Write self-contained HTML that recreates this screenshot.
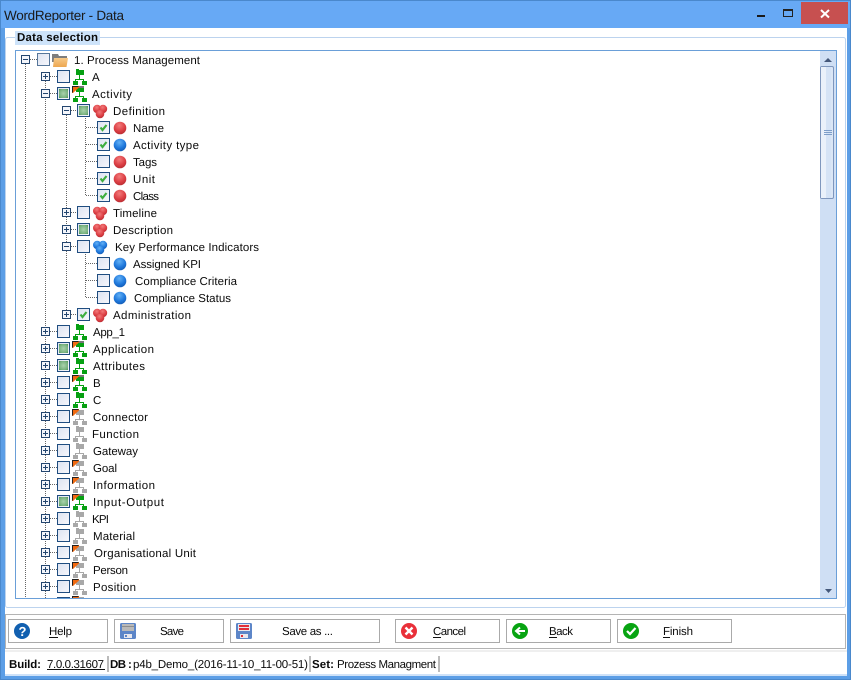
<!DOCTYPE html>
<html><head><meta charset="utf-8"><title>WordReporter - Data</title>
<style>
html,body{margin:0;padding:0;background:#fff;overflow:hidden;width:851px;height:680px}
svg{display:block}
text{font-family:"Liberation Sans",sans-serif;font-size:11.5px;fill:#0a0a0a;text-rendering:geometricPrecision}
.c{shape-rendering:crispEdges}
</style></head><body>
<svg width="851" height="680" viewBox="0 0 851 680" xmlns="http://www.w3.org/2000/svg">
<defs>
<linearGradient id="cbg" x1="0" y1="0" x2="1" y2="1"><stop offset="0" stop-color="#dde3f0"/><stop offset="1" stop-color="#f6f7fc"/></linearGradient>
<radialGradient id="gf" cx=".5" cy=".5" r=".7"><stop offset="0" stop-color="#a9d2ac"/><stop offset=".7" stop-color="#78b27e"/><stop offset="1" stop-color="#4b9354"/></radialGradient>
<linearGradient id="fld" x1="0" y1="0" x2="0" y2="1"><stop offset="0" stop-color="#f7c987"/><stop offset="1" stop-color="#eda750"/></linearGradient>
<radialGradient id="rb" cx=".45" cy=".3" r=".75"><stop offset="0" stop-color="#f27a7a"/><stop offset=".6" stop-color="#dc3f44"/><stop offset="1" stop-color="#b42a30"/></radialGradient>
<radialGradient id="bb" cx=".45" cy=".3" r=".75"><stop offset="0" stop-color="#62b0f5"/><stop offset=".6" stop-color="#1f78dc"/><stop offset="1" stop-color="#1258b0"/></radialGradient>
<clipPath id="tc"><rect x="16" y="51" width="804" height="547"/></clipPath>

<g id="cb"><rect class="c" x=".5" y="-6.5" width="12" height="12" fill="url(#cbg)" stroke="#1f4d80"/></g>
<g id="cf"><use href="#cb"/><rect class="c" x="2" y="-5" width="9" height="9" fill="url(#gf)"/></g>
<g id="ck"><use href="#cb"/><path d="M3.500 -.5L5.500 2L9.500 -3" fill="none" stroke="#3fae3f" stroke-width="2.200"/></g>
<g id="ep"><rect class="c" x=".5" y="-4.5" width="8" height="8" fill="#f4f6fb" stroke="#24466f"/><path class="c" d="M2 -.5H7M4.500 -3V2" stroke="#24466f" fill="none"/></g>
<g id="em"><rect class="c" x=".5" y="-4.5" width="8" height="8" fill="#f4f6fb" stroke="#24466f"/><path class="c" d="M2 -.5H7" stroke="#24466f" fill="none"/></g>

<g id="og"><path class="c" d="M76 -8h3v1h5v5h-8z" fill="#06a012"/><path class="c" d="M79.500 -2v4.500M75.500 6V2.500H83.500V6" fill="none" stroke="#06a012"/><rect class="c" x="73" y="4" width="5" height="4" fill="#06a012"/><rect class="c" x="82" y="4" width="5" height="4" fill="#06a012"/></g>
<g id="oa"><path class="c" d="M76 -8h3v1h5v5h-8z" fill="#a8a8a8"/><path class="c" d="M79.500 -2v4.500M75.500 6V2.500H83.500V6" fill="none" stroke="#a8a8a8"/><rect class="c" x="73" y="4" width="5" height="4" fill="#a8a8a8"/><rect class="c" x="82" y="4" width="5" height="4" fill="#a8a8a8"/></g>
<g id="fl"><path d="M72 -8h7v1.500l-6 5.500h-1z" fill="#f26a10"/><path class="c" d="M72.500 -1.500V-7.500H78.500" fill="none" stroke="#222"/></g>
<g id="fg"><use href="#og"/><rect class="c" x="79" y="-8" width="5" height="2" fill="#777"/><use href="#fl"/></g>
<g id="fa"><use href="#oa"/><use href="#fl"/></g>

<circle id="br" cx="0" cy="0" r="6.300" fill="url(#rb)"/>
<circle id="bl" cx="0" cy="0" r="6.300" fill="url(#bb)"/>
<g id="tr"><circle cx="97.200" cy="-2" r="4.200" fill="url(#rb)"/><circle cx="103" cy="-2" r="4.200" fill="url(#rb)"/><circle cx="100" cy="3" r="4.300" fill="url(#rb)"/></g>
<g id="tb"><circle cx="97.200" cy="-2" r="4.200" fill="url(#bb)"/><circle cx="103" cy="-2" r="4.200" fill="url(#bb)"/><circle cx="100" cy="3" r="4.300" fill="url(#bb)"/></g>
</defs>

<!-- window -->
<rect class="c" width="851" height="680" fill="#5c9ee6"/>
<rect class="c" x="0" y="0" width="851" height="1" fill="#4a88cc"/>
<rect class="c" x="1" y="1" width="849" height="27" fill="#67a9f5"/>
<rect class="c" x="0" y="0" width="1" height="680" fill="#4a88cc"/>
<rect class="c" x="850" y="0" width="1" height="680" fill="#4a88cc"/>
<rect class="c" x="0" y="679" width="851" height="1" fill="#4a88cc"/>
<rect class="c" x="5" y="28" width="842" height="648" fill="#fff"/>
<rect class="c" x="5" y="674" width="842" height="2" fill="#cfe2f8"/>
<rect class="c" x="801" y="2" width="47" height="22" fill="#c75050"/>
<path d="M821 10L829 17.500M829 10L821 17.500" stroke="#fff" stroke-width="2" fill="none"/>
<rect class="c" x="757" y="15" width="8" height="2" fill="#1a1a1a"/>
<rect class="c" x="783.500" y="9.500" width="9" height="7" fill="none" stroke="#222"/>
<rect class="c" x="783" y="9" width="10" height="2" fill="#222"/>
<text x="4" y="20" style="font-size:13.5px;fill:#1a1a1a" textLength="120">WordReporter - Data</text>

<!-- group -->
<rect x="5.500" y="37.500" width="840" height="570" rx="2" fill="#fff" stroke="#bcd3ee"/>
<rect class="c" x="15" y="31" width="85" height="14" fill="#cde3fa"/>
<text x="17" y="41" style="font-weight:bold" textLength="81">Data selection</text>

<!-- tree box -->
<rect class="c" x="15.500" y="50.500" width="821" height="548" fill="#fff" stroke="#6a9fd8"/>

<!-- scrollbar -->
<rect class="c" x="820" y="51" width="16" height="547" fill="#cfdff4"/>
<path d="M824 62l4 -4l4 4z" fill="#44587a"/>
<path d="M825 589l3.500 4l3.500 -4z" fill="#44587a"/>
<rect x="820.500" y="66.500" width="13" height="132" rx="1.500" fill="#dbe7f6" stroke="#7f97bd"/>
<rect class="c" x="821" y="67" width="5" height="131" fill="#eaf1fa"/>
<rect class="c" x="826" y="67" width="5" height="131" fill="#d5e3f5"/>
<rect class="c" x="824" y="130" width="8" height="1" fill="#7d9ec9"/>
<rect class="c" x="824" y="132" width="8" height="1" fill="#7d9ec9"/>
<rect class="c" x="824" y="134" width="8" height="1" fill="#7d9ec9"/>

<g clip-path="url(#tc)">
<!-- dotted lines -->
<g class="c" stroke="#666" stroke-dasharray="1 1" fill="none">
<path d="M25.500 64V598"/>
<path d="M45.500 81V598"/>
<path d="M66.500 115V311"/>
<path d="M85.500 116V196"/>
<path d="M85.500 252V298"/>
<path d="M30 59.500H37M50 76.500H57M50 93.500H57M71 110.500H77M71 212.500H77M71 229.500H77M71 246.500H77M71 314.500H77"/>
<path d="M86 127.500H97M86 144.500H97M86 161.500H97M86 178.500H97M86 195.500H97M86 263.500H97M86 280.500H97M86 297.500H97"/>
<path d="M50 331.500H57M50 348.500H57M50 365.500H57M50 382.500H57M50 399.500H57M50 416.500H57M50 433.500H57M50 450.500H57M50 467.500H57M50 484.500H57M50 501.500H57M50 518.500H57M50 535.500H57M50 552.500H57M50 569.500H57M50 586.500H57M50 603.500H57"/>
</g>

<!-- root -->
<use href="#em" x="21" y="60"/>
<rect class="c" x="37.500" y="53.500" width="12" height="12" fill="url(#cbg)" stroke="#56769a"/>
<path class="c" d="M52 54h6l1 2h8v6H52z" fill="#7d7d7d"/>
<path d="M54 58h14l-1.500 9H53z" fill="url(#fld)"/>
<text x="74" y="64" textLength="126">1. Process Management</text>

<!-- level 1 + -->
<use href="#ep" x="41" y="77"/><use href="#cb" x="57" y="77"/><use href="#og" y="77"/>
<text x="92" y="81">A</text>

<use href="#em" x="41" y="94"/><use href="#cf" x="57" y="94"/><use href="#fg" y="94"/>
<text x="92" y="98" textLength="40">Activity</text>

<use href="#em" x="62" y="111"/><use href="#cf" x="77" y="111"/><use href="#tr" y="111"/>
<text x="113" y="115" textLength="52">Definition</text>

<use href="#ck" x="97" y="128"/><use href="#br" x="120" y="128"/>
<text x="133" y="132" textLength="31">Name</text>
<use href="#ck" x="97" y="145"/><use href="#bl" x="120" y="145"/>
<text x="133" y="149" textLength="66">Activity type</text>
<use href="#cb" x="97" y="162"/><use href="#br" x="120" y="162"/>
<text x="133" y="166" textLength="24">Tags</text>
<use href="#ck" x="97" y="179"/><use href="#br" x="120" y="179"/>
<text x="133" y="183" textLength="22">Unit</text>
<use href="#ck" x="97" y="196"/><use href="#br" x="120" y="196"/>
<text x="133" y="200" textLength="26">Class</text>

<use href="#ep" x="62" y="213"/><use href="#cb" x="77" y="213"/><use href="#tr" y="213"/>
<text x="113" y="217" textLength="44">Timeline</text>
<use href="#ep" x="62" y="230"/><use href="#cf" x="77" y="230"/><use href="#tr" y="230"/>
<text x="113" y="234" textLength="60">Description</text>
<use href="#em" x="62" y="247"/><use href="#cb" x="77" y="247"/><use href="#tb" y="247"/>
<text x="115" y="251" textLength="144">Key Performance Indicators</text>

<use href="#cb" x="97" y="264"/><use href="#bl" x="120" y="264"/>
<text x="133" y="268" textLength="68">Assigned KPI</text>
<use href="#cb" x="97" y="281"/><use href="#bl" x="120" y="281"/>
<text x="135" y="285" textLength="102">Compliance Criteria</text>
<use href="#cb" x="97" y="298"/><use href="#bl" x="120" y="298"/>
<text x="134" y="302" textLength="97">Compliance Status</text>

<use href="#ep" x="62" y="315"/><use href="#ck" x="77" y="315"/><use href="#tr" y="315"/>
<text x="113" y="319" textLength="78">Administration</text>

<use href="#ep" x="41" y="332"/><use href="#cb" x="57" y="332"/><use href="#og" y="332"/>
<text x="93" y="336" textLength="32">App_1</text>
<use href="#ep" x="41" y="349"/><use href="#cf" x="57" y="349"/><use href="#fg" y="349"/>
<text x="93" y="353" textLength="61">Application</text>
<use href="#ep" x="41" y="366"/><use href="#cf" x="57" y="366"/><use href="#og" y="366"/>
<text x="93" y="370" textLength="52">Attributes</text>
<use href="#ep" x="41" y="383"/><use href="#cb" x="57" y="383"/><use href="#fg" y="383"/>
<text x="93" y="387">B</text>
<use href="#ep" x="41" y="400"/><use href="#cb" x="57" y="400"/><use href="#og" y="400"/>
<text x="93" y="404">C</text>
<use href="#ep" x="41" y="417"/><use href="#cb" x="57" y="417"/><use href="#fa" y="417"/>
<text x="93" y="421" textLength="55">Connector</text>
<use href="#ep" x="41" y="434"/><use href="#cb" x="57" y="434"/><use href="#oa" y="434"/>
<text x="92" y="438" textLength="47">Function</text>
<use href="#ep" x="41" y="451"/><use href="#cb" x="57" y="451"/><use href="#oa" y="451"/>
<text x="93" y="455" textLength="45">Gateway</text>
<use href="#ep" x="41" y="468"/><use href="#cb" x="57" y="468"/><use href="#fa" y="468"/>
<text x="93" y="472" textLength="24">Goal</text>
<use href="#ep" x="41" y="485"/><use href="#cb" x="57" y="485"/><use href="#fa" y="485"/>
<text x="93" y="489" textLength="62">Information</text>
<use href="#ep" x="41" y="502"/><use href="#cf" x="57" y="502"/><use href="#fg" y="502"/>
<text x="93" y="506" textLength="71">Input-Output</text>
<use href="#ep" x="41" y="519"/><use href="#cb" x="57" y="519"/><use href="#oa" y="519"/>
<text x="92" y="523" textLength="17">KPI</text>
<use href="#ep" x="41" y="536"/><use href="#cb" x="57" y="536"/><use href="#oa" y="536"/>
<text x="93" y="540" textLength="42">Material</text>
<use href="#ep" x="41" y="553"/><use href="#cb" x="57" y="553"/><use href="#fa" y="553"/>
<text x="94" y="557" textLength="102">Organisational Unit</text>
<use href="#ep" x="41" y="570"/><use href="#cb" x="57" y="570"/><use href="#fa" y="570"/>
<text x="93" y="574" textLength="35">Person</text>
<use href="#ep" x="41" y="587"/><use href="#cb" x="57" y="587"/><use href="#fa" y="587"/>
<text x="93" y="591" textLength="43">Position</text>
<use href="#ep" x="41" y="604"/><use href="#cb" x="57" y="604"/><use href="#fa" y="604"/>
</g>

<!-- bottom panel -->
<rect class="c" x="5.500" y="614.500" width="840" height="34" fill="#fff" stroke="#b4b4b4"/>
<g class="c" fill="#fff" stroke="#aaa">
<rect x="8.500" y="619.500" width="99" height="23"/>
<rect x="114.500" y="619.500" width="109" height="23"/>
<rect x="230.500" y="619.500" width="149" height="23"/>
<rect x="395.500" y="619.500" width="104" height="23"/>
<rect x="506.500" y="619.500" width="104" height="23"/>
<rect x="617.500" y="619.500" width="114" height="23"/>
</g>

<!-- Help -->
<circle cx="22" cy="631" r="8" fill="#1160b0"/>
<text x="18.500" y="636" style="font-size:13px;font-weight:bold;fill:#fff">?</text>
<text x="49" y="635" textLength="23">Help</text>
<rect class="c" x="49" y="637" width="9" height="1" fill="#111"/>
<!-- Save -->
<rect x="120" y="623" width="16" height="16" rx="1.500" fill="#5d86c8"/>
<rect class="c" x="122" y="624" width="12" height="7" fill="#b9b9b9"/>
<rect class="c" x="122" y="626" width="12" height="1" fill="#8d8d8d"/>
<rect class="c" x="124" y="634" width="8" height="4" fill="#e8e8ee"/>
<rect class="c" x="125" y="635" width="2" height="2" fill="#5d86c8"/>
<text x="160" y="635" textLength="24">Save</text>
<!-- Save as -->
<rect x="236" y="623" width="16" height="16" rx="1.500" fill="#5d86c8"/>
<rect class="c" x="238" y="624" width="12" height="7" fill="#e8e8ee"/>
<rect class="c" x="239" y="625" width="10" height="2" fill="#e2303a"/>
<rect class="c" x="239" y="628" width="10" height="2" fill="#e2303a"/>
<rect class="c" x="240" y="634" width="8" height="4" fill="#e8e8ee"/>
<rect class="c" x="241" y="635" width="2" height="2" fill="#e2303a"/>
<text x="282" y="635" textLength="51">Save as ...</text>
<!-- Cancel -->
<circle cx="409" cy="631" r="8" fill="#e9303a"/>
<path d="M405.500 627.500L412.500 634.500M412.500 627.500L405.500 634.500" stroke="#fff" stroke-width="2.400" fill="none"/>
<text x="433" y="635" textLength="33">Cancel</text>
<rect class="c" x="433" y="637" width="8" height="1" fill="#111"/>
<!-- Back -->
<circle cx="520" cy="631" r="8" fill="#08a412"/>
<path d="M525 631H517M520 627.500L516 631L520 634.500" stroke="#fff" stroke-width="2" fill="none"/>
<text x="549" y="635" textLength="24">Back</text>
<rect class="c" x="549" y="637" width="8" height="1" fill="#111"/>
<!-- Finish -->
<circle cx="631" cy="631" r="8" fill="#08a412"/>
<path d="M627 631L630 634L635.500 628" stroke="#fff" stroke-width="2.200" fill="none"/>
<text x="663" y="635" textLength="30">Finish</text>
<rect class="c" x="663" y="637" width="7" height="1" fill="#111"/>

<!-- status -->
<rect class="c" x="5" y="650" width="842" height="2" fill="#efefef"/>
<text x="9" y="668" style="font-weight:bold" textLength="32">Build:</text>
<text x="47" y="668" textLength="57">7.0.0.31607</text>
<rect class="c" x="47" y="669" width="58" height="1" fill="#111"/>
<rect class="c" x="107" y="656" width="2" height="16" fill="#bbb"/>
<text x="110" y="668" style="font-weight:bold" textLength="16">DB</text>
<text x="128" y="668" style="font-weight:bold">:</text>
<text x="133" y="668" textLength="175">p4b_Demo_(2016-11-10_11-00-51)</text>
<rect class="c" x="309" y="656" width="2" height="16" fill="#bbb"/>
<text x="312" y="668" style="font-weight:bold" textLength="22">Set:</text>
<text x="337" y="668" textLength="99">Prozess Managment</text>
<rect class="c" x="438" y="656" width="2" height="16" fill="#bbb"/>
</svg>
</body></html>
